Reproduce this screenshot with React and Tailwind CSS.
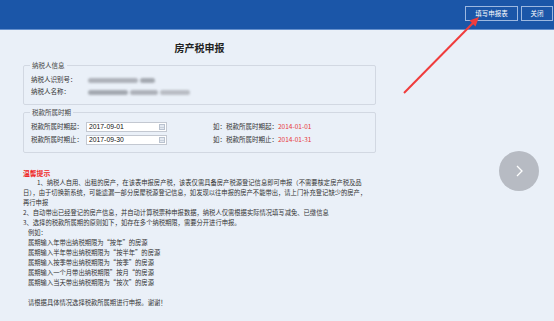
import React from 'react';

const FONT = "font-['Noto_Sans_CJK_SC','Noto_Sans',sans-serif]";

const tips = [
  { text: '1、纳税人自用、出租的房产，在该表申报房产税，该表仅需具备房产税源登记信息即可申报（不需要核定房产税及品', indent: 'pl-[14px]' },
  { text: '日），由于切换新系统，可能遗漏一部分房屋税源登记信息，如发现以往申报的房产不能带出，请上门补充登记缺少的房产，', indent: '' },
  { text: '再行申报', indent: '' },
  { text: '2、自动带出已经登记的房产信息，并自动计算税票种申报数据，纳税人仅需根据实际情况填写减免、已缴信息', indent: '' },
  { text: '3、选择的税款所属期的原则如下，如存在多个纳税期限，需要分开进行申报。', indent: '' },
  { text: '例如：', indent: 'pl-[5px]' },
  { text: '属期输入年带出纳税期限为“按年”的房源', indent: 'pl-[5px]' },
  { text: '属期输入半年带出纳税期限为“按半年”的房源', indent: 'pl-[5px]' },
  { text: '属期输入按季带出纳税期限为“按季”的房源', indent: 'pl-[5px]' },
  { text: '属期输入一个月带出纳税期限”按月“的房源', indent: 'pl-[5px]' },
  { text: '属期输入当天带出纳税期限为“按次”的房源', indent: 'pl-[5px]' },
  { text: '\u00a0', indent: '' },
  { text: '请根据具体情况选择税款所属期进行申报。谢谢！', indent: 'pl-[5px]' }
];

const DateInput = ({ value }) => (
  <div className="w-[81px] h-[10px] border border-[#c3c8d1] bg-white flex items-center justify-between pl-[2px] pr-[1px]">
    <span className="text-[6.8px] leading-none text-[#111] font-['Liberation_Sans',sans-serif]">{value}</span>
    <span className="w-[6px] h-[6px] border border-[#b9c2cf] bg-[#e4e9f1] flex flex-col justify-end">
      <span className="h-[1px] bg-[#c9d1dc] mb-[1px]" />
    </span>
  </div>
);

const App = () => {
  return (
    <div className={`relative w-[554px] h-[321px] overflow-hidden bg-[#eaf0f8] text-[#333] ${FONT}`}>
      <header className="h-[30px] bg-[#1b56a8] border-b border-[#6690cc] flex items-start justify-end gap-[3px] pt-[6px] pr-[1px]">
        <button type="button" className="w-[53px] h-[15px] border border-[#9db8e0] text-white text-[6.5px] leading-none">
          填写申报表
        </button>
        <button type="button" className="w-[32px] h-[15px] border border-[#9db8e0] text-white text-[6.5px] leading-none">
          关闭
        </button>
      </header>

      <main className="ml-[23px] w-[353px]">
        <h1 className="mt-[12px] text-center text-[10px] leading-[12px] font-bold text-[#222]">房产税申报</h1>

        <fieldset className="mt-[6px] border border-[#d2d8e2] rounded-[2px] pl-[7px] pt-[4px] pb-[6px] text-[6.5px]">
          <legend className="px-[2px] -ml-[1px] leading-[10px] text-[#444]">纳税人信息</legend>
          <div className="flex items-center h-[12px]">
            <span className="w-[57px]">纳税人识别号：</span>
            <div className="flex items-center gap-[2px] blur-[1px]">
              <div className="w-[50px] h-[5px] rounded-full bg-[#aeb2ba]" />
              <div className="w-[15px] h-[5px] rounded-full bg-[#a4a9b1]" />
            </div>
          </div>
          <div className="flex items-center h-[12px]">
            <span className="w-[57px]">纳税人名称：</span>
            <div className="flex items-center gap-[2px] blur-[1px]">
              <div className="w-[40px] h-[5px] rounded-full bg-[#a4a9b1]" />
              <div className="w-[28px] h-[5px] rounded-full bg-[#aeb2ba]" />
              <div className="w-[30px] h-[5px] rounded-full bg-[#b9bdc4]" />
            </div>
          </div>
        </fieldset>

        <fieldset className="mt-[2px] border border-[#d2d8e2] rounded-[2px] pl-[7px] pt-[4px] pb-[6px] text-[6.5px]">
          <legend className="px-[2px] -ml-[1px] leading-[10px] text-[#444]">税款所属时期</legend>
          <div className="flex flex-col gap-[1px]">
            <div className="flex items-center h-[12px]">
              <span className="w-[55px]">税款所属时期起：</span>
              <DateInput value="2017-09-01" />
              <span className="ml-[46px]">
                如：税款所属时期起：<span className="text-[#e8383a]">2014-01-01</span>
              </span>
            </div>
            <div className="flex items-center h-[12px]">
              <span className="w-[55px]">税款所属时期止：</span>
              <DateInput value="2017-09-30" />
              <span className="ml-[46px]">
                如：税款所属时期止：<span className="text-[#e8383a]">2014-01-31</span>
              </span>
            </div>
          </div>
        </fieldset>

        <div className="mt-[15px] text-[6.3px] leading-[10px] whitespace-nowrap">
          <div className="font-bold text-[#f02424] text-[6.8px]">温馨提示</div>
          {tips.map((line, i) => (
            <div key={i} className={line.indent}>
              {line.text}
            </div>
          ))}
        </div>
      </main>

      <div className="absolute left-[499px] top-[151px] w-[40px] h-[40px] rounded-full bg-[#b7bbc3] flex items-center justify-center">
        <svg width="10" height="12" viewBox="0 0 10 12" fill="none">
          <path d="M3 1 L8 6 L3 11" stroke="white" strokeWidth="1.3" />
        </svg>
      </div>

      <svg className="absolute left-0 top-0 pointer-events-none" width="554" height="321">
        <line x1="404" y1="93" x2="474" y2="22" stroke="#f03c3c" strokeWidth="2" />
        <polygon points="479,17 475.5,26.5 469.5,20.5" fill="#f03c3c" />
      </svg>
    </div>
  );
};

export default App;
